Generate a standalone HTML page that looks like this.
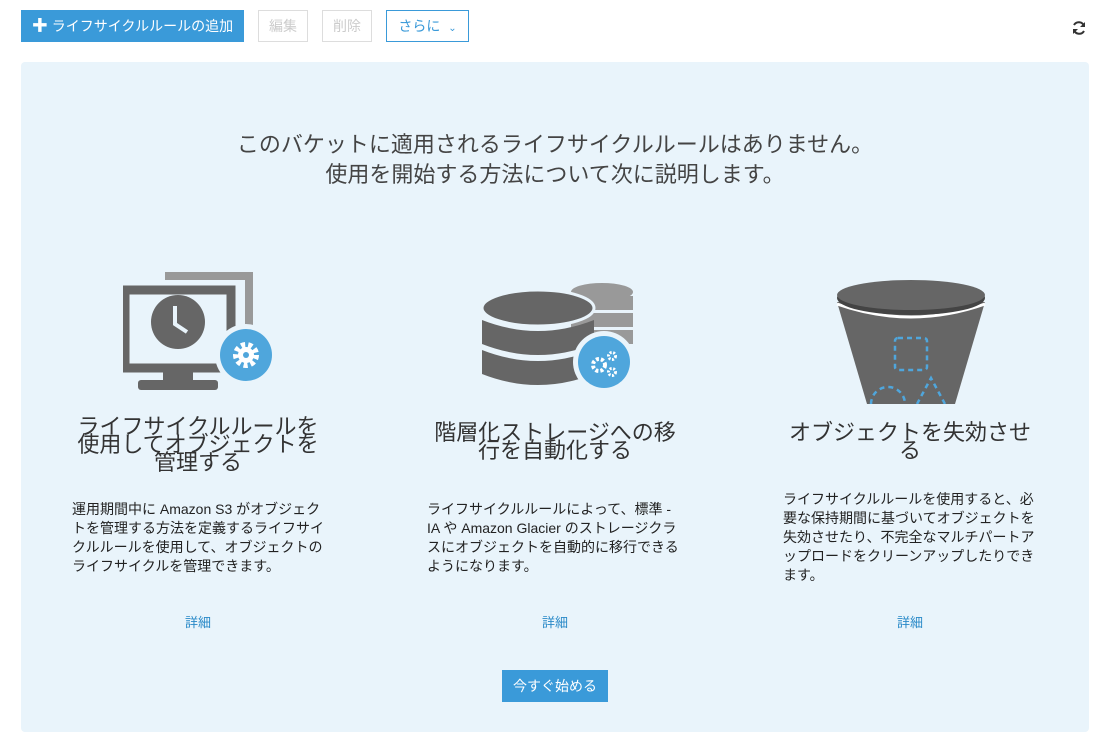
<!DOCTYPE html>
<html><head><meta charset="utf-8"><style>
*{box-sizing:border-box;margin:0;padding:0}
body{width:1100px;height:740px;background:#fff;font-family:"Liberation Sans","Noto Sans CJK JP",sans-serif;color:#333;position:relative;overflow:hidden}
.btn{position:absolute;top:10px;height:32px;font-size:14px;line-height:30px;text-align:center;border:1px solid #ddd;color:#ccc;background:#fff}
.panel{position:absolute;left:21px;top:62px;width:1068px;height:670px;background:#e9f4fb;border-radius:4px}
.title{position:absolute;left:0;width:100%;top:68px;text-align:center;font-size:22px;line-height:30px;color:#444}
.col{position:absolute;width:260px;text-align:center}
.h{position:absolute;left:0;width:100%;font-size:22px;line-height:18px;color:#333}
.p{position:absolute;text-align:left;font-size:14px;line-height:19px;color:#222}
.lk{position:absolute;font-size:13px;color:#2a8ac8;width:100%;text-align:center}
</style></head><body>
<div class="btn" style="left:21px;width:223px;background:#3a9ad9;border-color:#3a9ad9;color:#fff"><b style="font-size:16px">✚</b>&nbsp;ライフサイクルルールの追加</div>
<div class="btn" style="left:258px;width:50px">編集</div>
<div class="btn" style="left:322px;width:50px">削除</div>
<div class="btn" style="left:386px;width:83px;border-color:#3a9ad9;color:#3a9ad9">さらに &nbsp;<span style="font-size:10px">⌄</span></div>
<svg style="position:absolute;left:1071px;top:20px" width="16" height="16" viewBox="0 0 16 16"><path d="M13 6A5.5 5.5 0 0 0 3 5M3 10a5.5 5.5 0 0 0 10 1" fill="none" stroke="#333" stroke-width="2"/><path d="M14 2v5h-5zM2 14V9h5z" fill="#333"/></svg>
<div class="panel">
<div class="title">このバケットに適用されるライフサイクルルールはありません。<br>使用を開始する方法について次に説明します。</div>
<div class="col" style="left:47px;top:0">
<svg style="position:absolute;left:55px;top:208px" width="155" height="130" viewBox="0 0 155 130">
<path d="M42 2h88v80h-8V10H42z" fill="#999"/>
<rect x="2" y="20" width="106" height="78" fill="none" stroke="#666" stroke-width="9"/>
<rect x="40" y="98" width="30" height="14" fill="#666"/>
<rect x="15" y="110" width="80" height="10" rx="3" fill="#666"/>
<circle cx="55" cy="52" r="27" fill="#666"/><path d="M52 36v18l12 8" fill="none" stroke="#e9f4fb" stroke-width="4"/>
<circle cx="123" cy="85" r="31" fill="#e9f4fb"/><circle cx="123" cy="85" r="26" fill="#4fa6dc"/>
<circle cx="123" cy="85" r="10" fill="none" stroke="#fff" stroke-width="6" stroke-dasharray="4 3"/><circle cx="123" cy="85" r="8" fill="#fff"/><circle cx="123" cy="85" r="3" fill="#4fa6dc"/>
</svg>
<div class="h" style="top:356px">ライフサイクルルールを<br>使用してオブジェクトを<br>管理する</div>
<div class="p" style="left:4px;top:438px;width:256px">運用期間中に Amazon S3 がオブジェクトを管理する方法を定義するライフサイクルルールを使用して、オブジェクトのライフサイクルを管理できます。</div>
<div class="lk" style="top:550px">詳細</div>
</div>
<div class="col" style="left:404px;top:0">
<svg style="position:absolute;left:54px;top:218px" width="160" height="120" viewBox="0 0 160 120">
<ellipse cx="123" cy="12" rx="31" ry="9" fill="#999"/><rect x="92" y="16" width="62" height="14" fill="#999"/><rect x="92" y="33" width="62" height="14" fill="#999"/><rect x="92" y="50" width="62" height="14" fill="#999"/>
<ellipse cx="59" cy="28" rx="56" ry="18" fill="#666" stroke="#e9f4fb" stroke-width="3"/>
<path d="M3 40q56 22 112 0v24q-56 22-112 0z" fill="#666"/><path d="M3 70q56 22 112 0v24q-56 22-112 0z" fill="#666"/>
<circle cx="125" cy="82" r="31" fill="#e9f4fb"/><circle cx="125" cy="82" r="26" fill="#4fa6dc"/>
<circle cx="120" cy="85" r="6" fill="none" stroke="#fff" stroke-width="4" stroke-dasharray="3 2"/><circle cx="133" cy="76" r="3.5" fill="none" stroke="#fff" stroke-width="3" stroke-dasharray="2 1.5"/><circle cx="133" cy="92" r="3.5" fill="none" stroke="#fff" stroke-width="3" stroke-dasharray="2 1.5"/>
</svg>
<div class="h" style="top:362px">階層化ストレージへの移<br>行を自動化する</div>
<div class="p" style="left:2px;top:438px;width:256px">ライフサイクルルールによって、標準 - IA や Amazon Glacier のストレージクラスにオブジェクトを自動的に移行できるようになります。</div>
<div class="lk" style="top:550px">詳細</div>
</div>
<div class="col" style="left:759px;top:0">
<svg style="position:absolute;left:55px;top:218px" width="152" height="124" viewBox="0 0 152 124">
<path d="M2 22h148l-30 102H32z" fill="#666"/>
<path d="M2 24q74 26 148 0" fill="none" stroke="#fff" stroke-width="3"/>
<ellipse cx="76" cy="18" rx="74" ry="17" fill="#444"/><ellipse cx="76" cy="15" rx="74" ry="15" fill="#666"/>
<rect x="60" y="58" width="32" height="32" rx="3" fill="none" stroke="#4fa6dc" stroke-width="2.5" stroke-dasharray="5 4"/>
<path d="M36 124a17 17 0 0 1 34 0M82 124l14-26 14 26" fill="none" stroke="#4fa6dc" stroke-width="2.5" stroke-dasharray="5 4"/>
</svg>
<div class="h" style="top:362px">オブジェクトを失効させ<br>る</div>
<div class="p" style="left:3px;top:428px;width:256px">ライフサイクルルールを使用すると、必要な保持期間に基づいてオブジェクトを失効させたり、不完全なマルチパートアップロードをクリーンアップしたりできます。</div>
<div class="lk" style="top:550px">詳細</div>
</div>
<div style="position:absolute;left:481px;top:608px;width:106px;height:32px;background:#3a9ad9;color:#fff;font-size:14px;line-height:32px;text-align:center">今すぐ始める</div>
</div>
</body></html>
